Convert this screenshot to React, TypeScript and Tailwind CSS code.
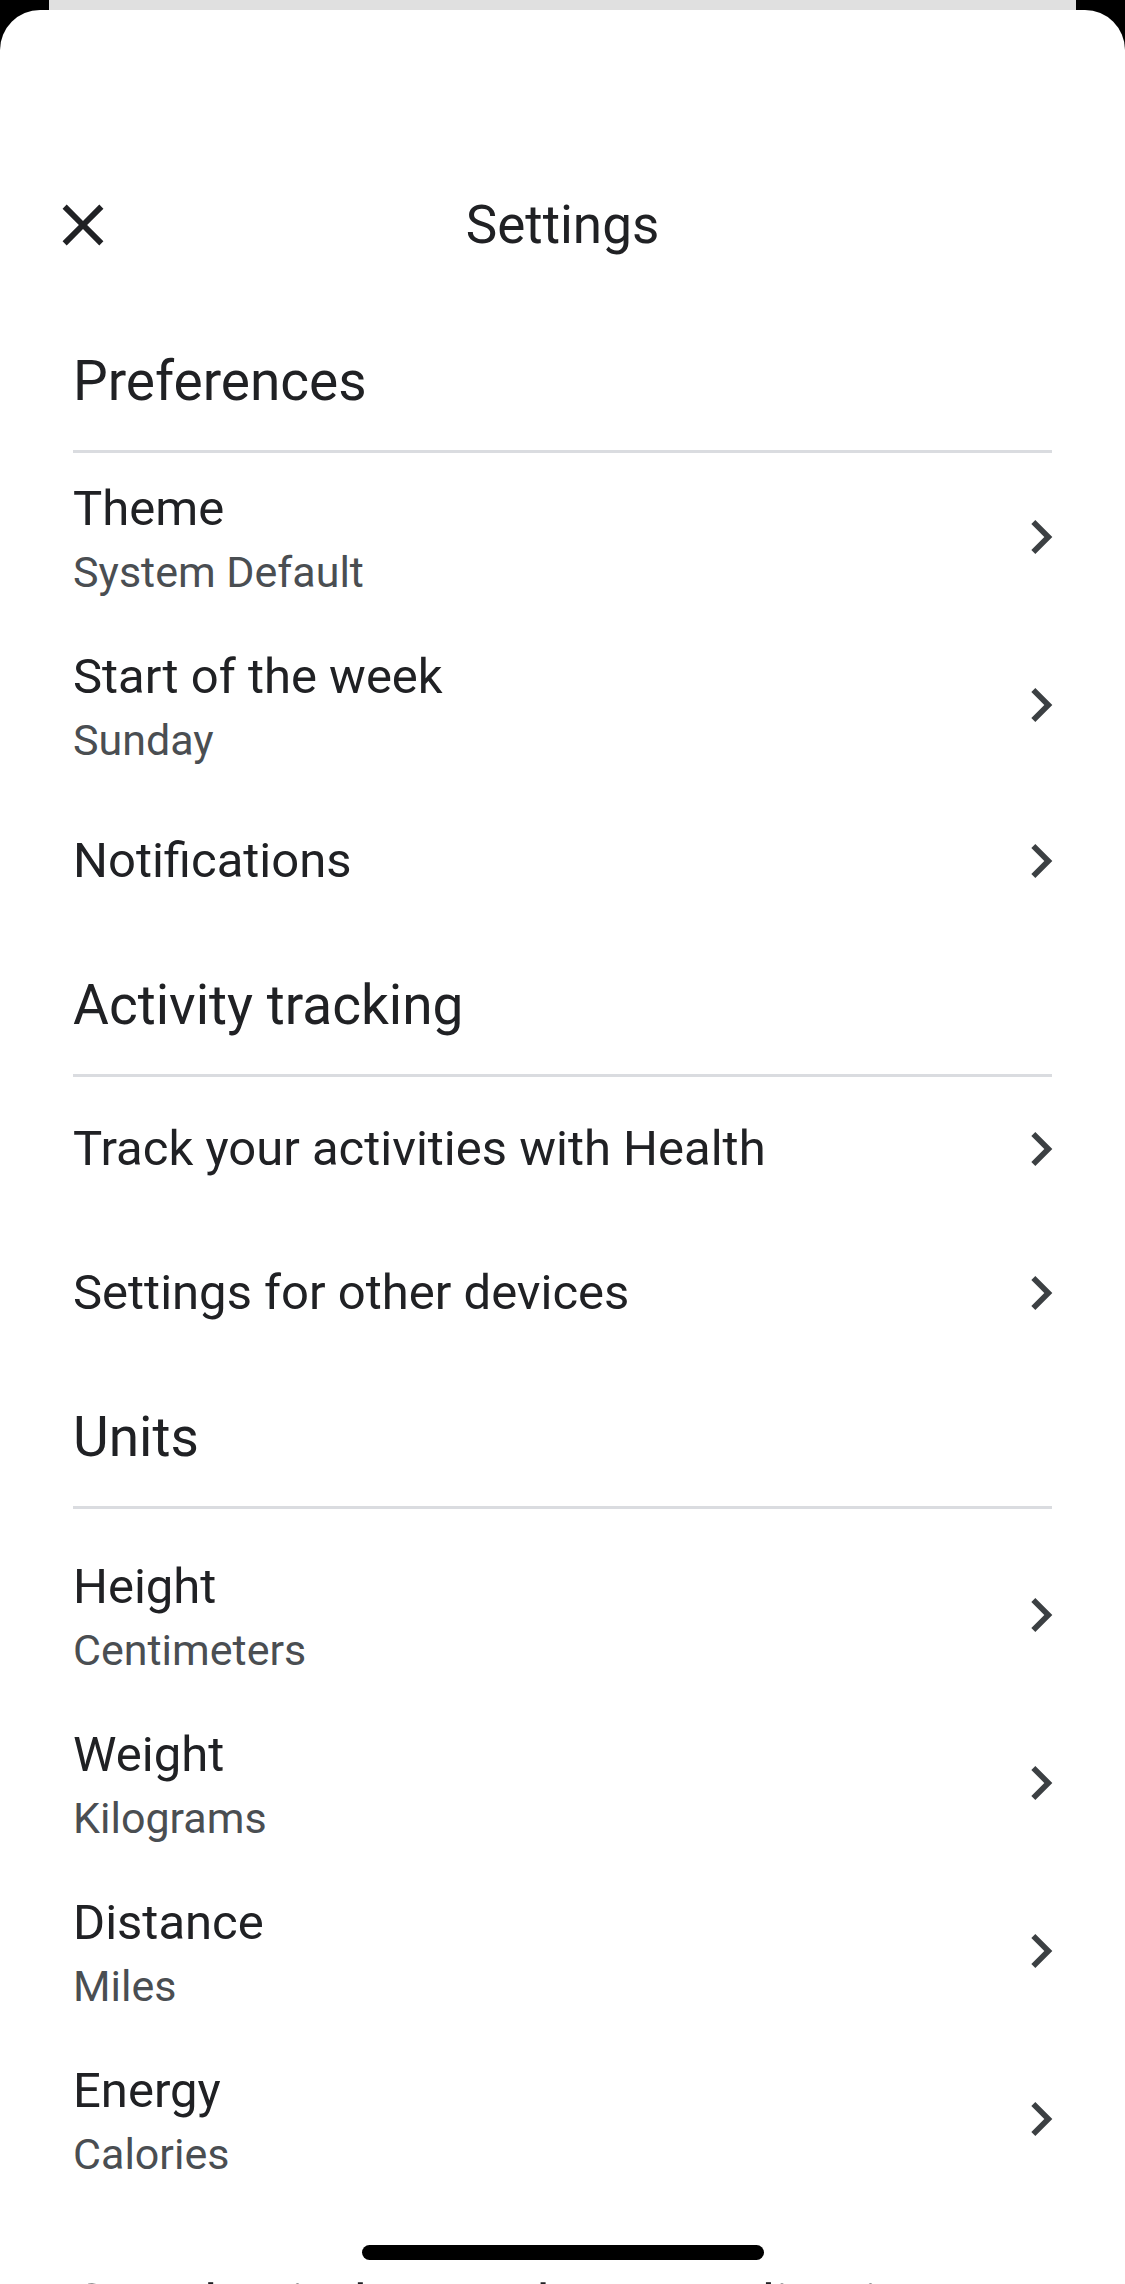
import React from 'react';

interface Row {
  title: string;
  value?: string;
}

interface Section {
  heading: string;
  rows: Row[];
  padTop?: boolean;
}

const SECTIONS: Section[] = [
  {
    heading: 'Preferences',
    rows: [
      { title: 'Theme', value: 'System Default' },
      { title: 'Start of the week', value: 'Sunday' },
      { title: 'Notifications' },
    ],
  },
  {
    heading: 'Activity tracking',
    rows: [
      { title: 'Track your activities with Health' },
      { title: 'Settings for other devices' },
    ],
  },
  {
    heading: 'Units',
    padTop: true,
    rows: [
      { title: 'Height', value: 'Centimeters' },
      { title: 'Weight', value: 'Kilograms' },
      { title: 'Distance', value: 'Miles' },
      { title: 'Energy', value: 'Calories' },
    ],
  },
];

function Chevron() {
  return (
    <svg viewBox="0 0 24 24" className="w-[68px] h-[68px] shrink-0 -mr-[23px]" fill="#3c4043">
      <path d="M10 6L8.59 7.41 13.17 12l-4.58 4.59L10 18l6-6z" />
    </svg>
  );
}

function SettingRow({ title, value }: Row) {
  if (!value) {
    return (
      <div className="flex items-center justify-between h-[144px]">
        <span className="text-[49px] leading-[60px] text-[#202124]">{title}</span>
        <Chevron />
      </div>
    );
  }
  return (
    <div className="flex items-center justify-between h-[168px]">
      <div className="flex flex-col">
        <span className="text-[49px] leading-[60px] text-[#202124]">{title}</span>
        <span className="mt-[9px] text-[43px] leading-[48px] text-[#4a4e52]">{value}</span>
      </div>
      <Chevron />
    </div>
  );
}

export default function App() {
  return (
    <div className="relative w-[1125px] h-[2284px] overflow-hidden bg-black font-['Roboto',sans-serif]">
      <div className="mx-[49px] h-[10px] bg-[#e0e0e0]" />
      <div className="bg-white rounded-t-[40px] h-[2274px] pt-[165px]">
        <div className="relative flex items-center justify-center h-[100px]">
          <button className="absolute left-[48px] top-[15px] w-[70px] h-[70px]">
            <svg viewBox="0 0 24 24" className="w-[70px] h-[70px]" fill="#202124">
              <path d="M19 6.41L17.59 5 12 10.59 6.41 5 5 6.41 10.59 12 5 17.59 6.41 19 12 13.41 17.59 19 19 17.59 13.41 12z" />
            </svg>
          </button>
          <h1 className="text-[53px] leading-[60px] text-[#202124]">Settings</h1>
        </div>

        <div className="px-[73px] pt-[34px]">
          {SECTIONS.map((s) => (
            <section key={s.heading}>
              <div className="pt-[42px] pb-[39px]">
                <h2 className="text-[55px] leading-[60px] text-[#202124]">{s.heading}</h2>
              </div>
              <div className="h-[3px] bg-[#dadce0]" />
              <div className={s.padTop ? 'pt-[22px]' : ''}>
                {s.rows.map((r) => (
                  <SettingRow key={r.title} {...r} />
                ))}
              </div>
            </section>
          ))}
          <div className="pt-[72px]">
            <h2 className="text-[55px] leading-[60px] text-[#202124] whitespace-nowrap">
              Google Fit data and personalization
            </h2>
          </div>
        </div>
      </div>
      <div className="absolute left-[362px] top-[2245px] w-[402px] h-[15px] rounded-full bg-black" />
    </div>
  );
}
